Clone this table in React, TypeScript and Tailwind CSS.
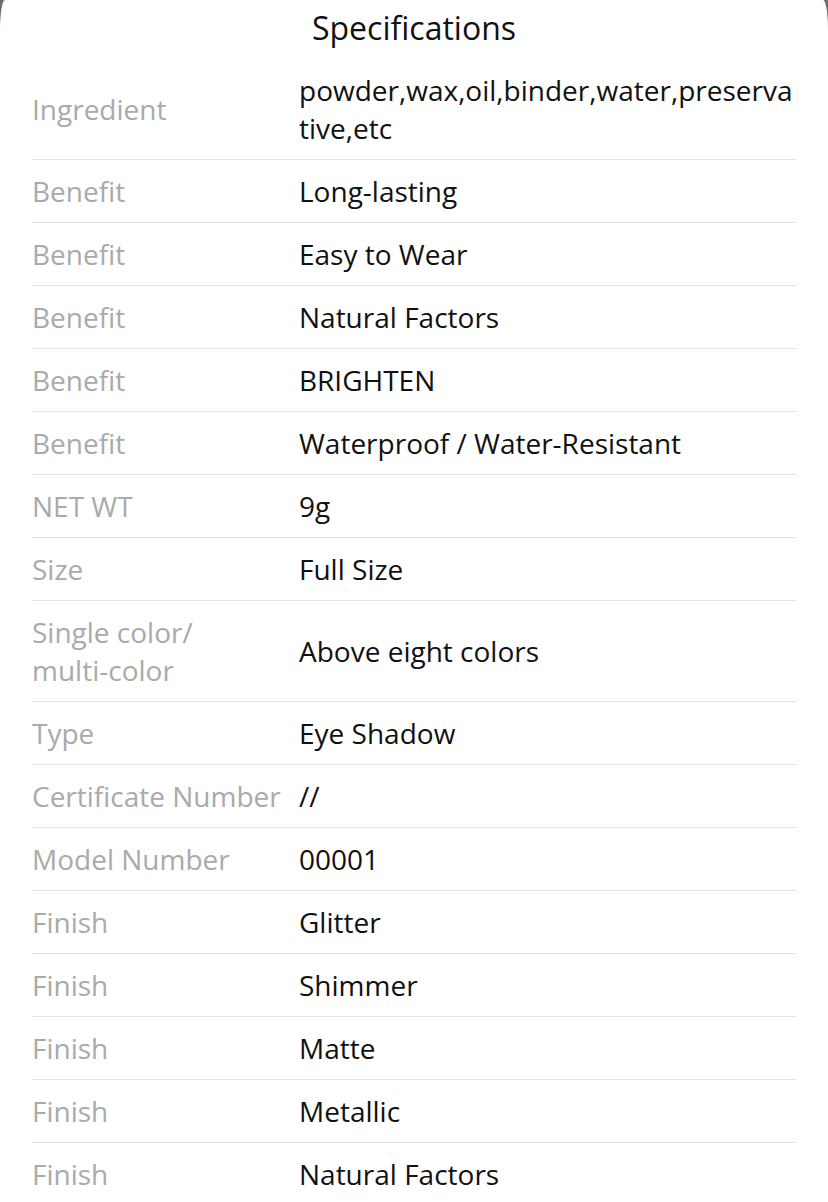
const SPECS: { label: string; value: string }[] = [
  { label: "Ingredient", value: "powder,wax,oil,binder,water,preservative,etc" },
  { label: "Benefit", value: "Long-lasting" },
  { label: "Benefit", value: "Easy to Wear" },
  { label: "Benefit", value: "Natural Factors" },
  { label: "Benefit", value: "BRIGHTEN" },
  { label: "Benefit", value: "Waterproof / Water-Resistant" },
  { label: "NET WT", value: "9g" },
  { label: "Size", value: "Full Size" },
  { label: "Single color/\nmulti-color", value: "Above eight colors" },
  { label: "Type", value: "Eye Shadow" },
  { label: "Certificate Number", value: "//" },
  { label: "Model Number", value: "00001" },
  { label: "Finish", value: "Glitter" },
  { label: "Finish", value: "Shimmer" },
  { label: "Finish", value: "Matte" },
  { label: "Finish", value: "Metallic" },
  { label: "Finish", value: "Natural Factors" },
];

export default function App() {
  return (
    <div className="min-h-screen bg-[#6e6e6e]" style={{ fontFamily: '"Open Sans", "Noto Sans", sans-serif' }}>
      <div className="min-h-screen bg-white rounded-tl-[5px_30px] rounded-tr-[5px_30px] px-8">
        <h2 className="h-[59px] pt-[7px] text-center text-[32px] leading-[42px] text-[#111]">Specifications</h2>
        <div>
          {SPECS.map((s, i) => (
            <div
              key={i}
              className="flex items-center border-b border-[#e3e3e3] py-[12px] text-[28px] leading-[38px]"
            >
              <div className="w-[267px] shrink-0 whitespace-pre-line text-[#aaaaaa]">{s.label}</div>
              <div className="flex-1 break-all text-[#111]">{s.value}</div>
            </div>
          ))}
        </div>
      </div>
    </div>
  );
}
